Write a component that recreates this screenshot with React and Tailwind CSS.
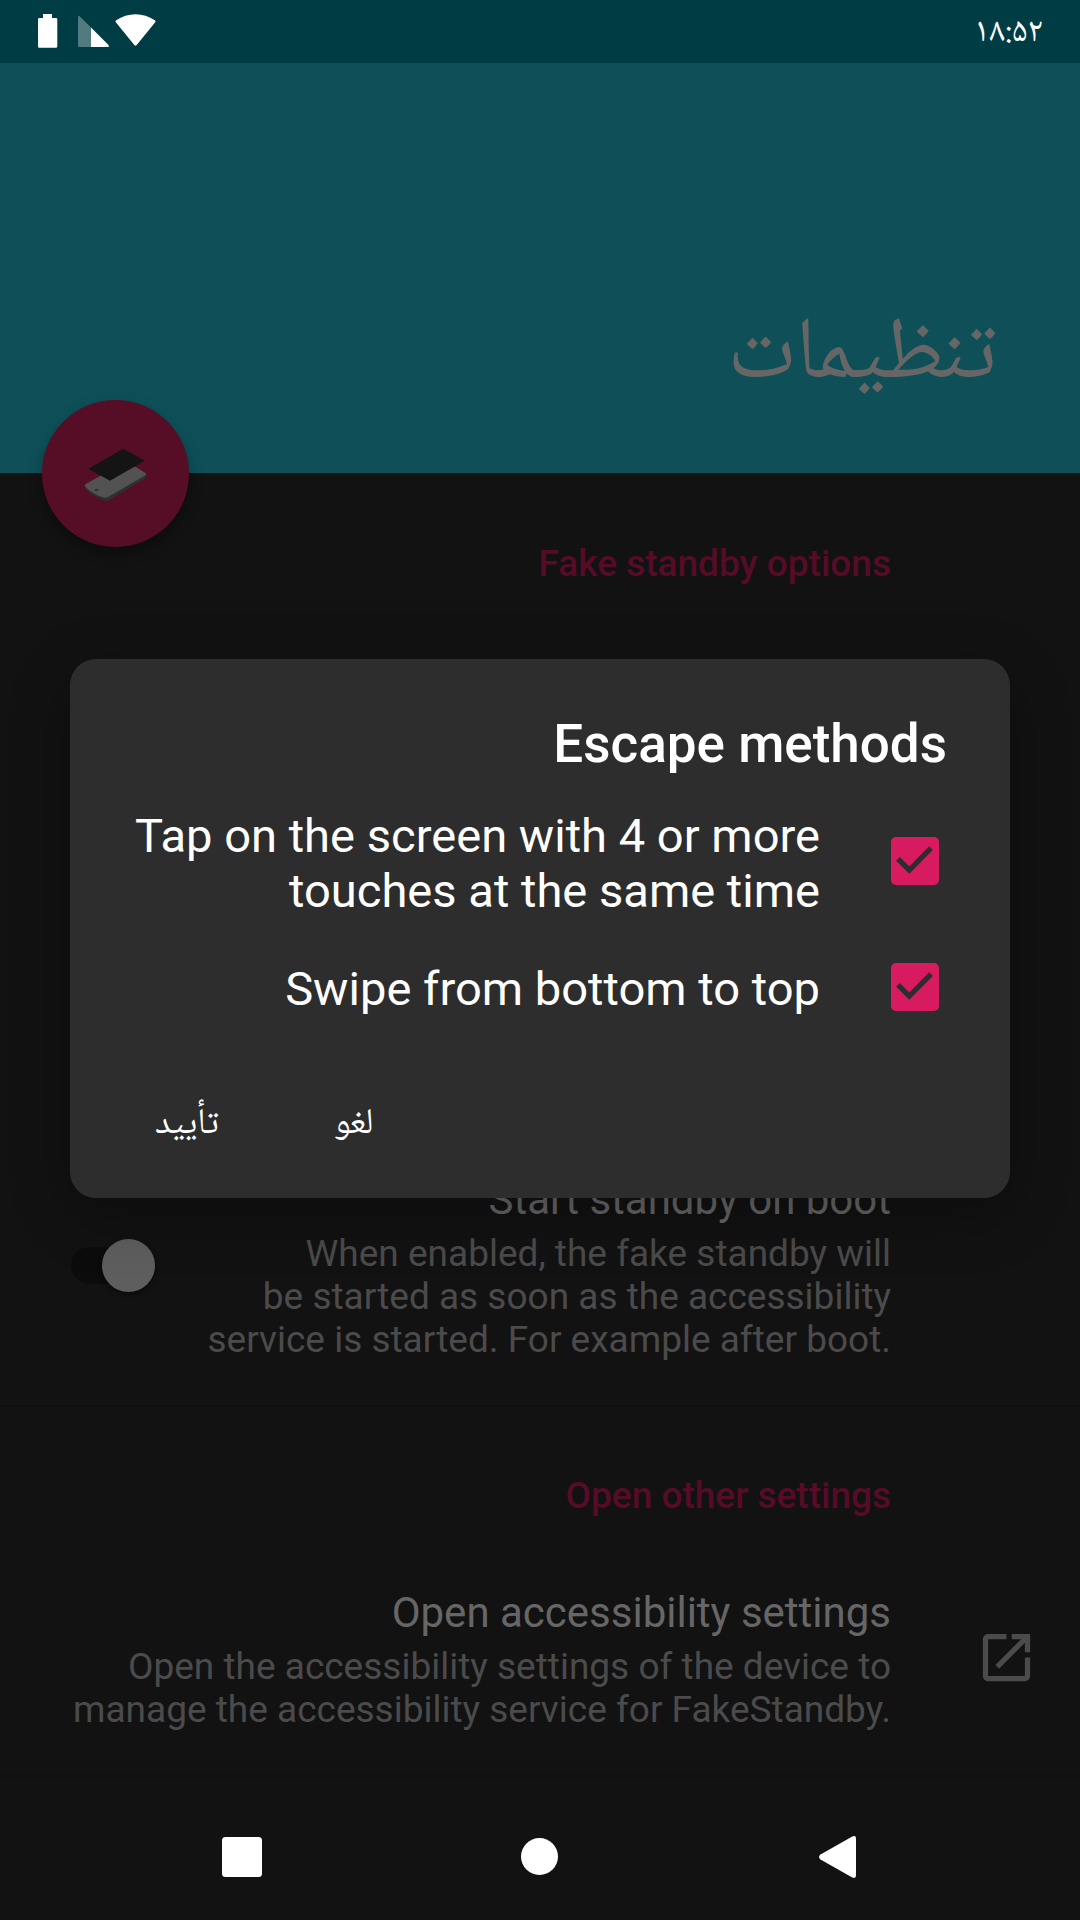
function StatusBar() {
  return (
    <header className="flex h-[63px] items-start justify-between bg-[#003c43]">
      <svg className="h-[63px] w-[200px]" viewBox="0 0 200 63" fill="#fff">
        <path d="M43 14h9v4h4q1.300 0 1.300 1.300v27q0 1.500-1.300 1.500H39.300q-1.300 0-1.300-1.300V19.300Q38 18 39.300 18H43z" />
        <path d="M78 17.200q0-2.400 1.800-.6L91 27.600V47H79.300Q78 47 78 45.700z" opacity=".32" />
        <path d="M91 27.600 108.500 45q1 2-.8 2H91z" />
        <path d="M115.800 22.300q-1-1 .4-2Q125 14.200 135.500 14.200t19.300 6.100q1.400 1 .4 2L136.700 45q-1.200 1.300-2.400 0z" />
      </svg>
      <span dir="ltr" className="mr-[37px] mt-[14px] font-['Noto_Naskh_Arabic','Noto_Sans_Arabic','DejaVu_Sans',sans-serif] text-[34.5px] leading-[40px] text-white">۱۸:۵۲</span>
    </header>
  );
}

function Fab() {
  return (
    <div className="absolute left-[42px] top-[400px] size-[147px] rounded-full bg-[#560d26] shadow-[0_6px_14px_rgba(0,0,0,0.35)]">
      <svg className="size-full" viewBox="0 0 147 147">
        <path d="M42.700 85.500v3Q51 97 63 100.700q2 .6 3.500-.3L104.500 78v-3z" fill="#2f2f2f" />
        <path d="M43.500 84.300 85 60.500l8 6 10.500 6.500q1.500 1.200 0 2.200L66 97q-2 1-4.200.5Q50 94 43.200 86.500q-.9-1.300.3-2.200z" fill="#525252" />
        <ellipse cx="54.500" cy="90" rx="2" ry="1.200" fill="#333" />
        <path d="M81.300 48.700 102.700 60.700 68 80.700 46.300 68.700z" fill="#141414" />
      </svg>
    </div>
  );
}

function CheckRow({ children, className }) {
  return (
    <div className={className}>
      <span dir="ltr" className="w-[750px] whitespace-pre-line text-right text-[47.100px] leading-[55px] text-white">{children}</span>
      <svg className="relative -top-[2px] ml-[71px] size-[48px]" viewBox="0 0 48 48">
        <rect width="48" height="48" rx="5" fill="#d81b60" />
        <path d="M7 21.800 18.300 33 40 11.200" fill="none" stroke="#2d2d2d" strokeWidth="5.200" />
      </svg>
    </div>
  );
}

function Dialog() {
  return (
    <section className="absolute left-[70px] top-[659px] flex h-[539px] w-[940px] flex-col rounded-[26px] bg-[#2d2d2d] shadow-[0_16px_60px_rgba(0,0,0,0.3)]">
      <h2 className="mr-[63px] mt-[54px] text-right text-[53px] font-medium leading-[62px] text-white">Escape methods</h2>
      <CheckRow className="mt-[33px] flex h-[110px] items-center">{"Tap on the screen with 4 or more\ntouches at the same time"}</CheckRow>
      <CheckRow className="mt-[43px] flex h-[55px] items-center">Swipe from bottom to top</CheckRow>
      <div className="ml-[85px] mt-[85px] flex items-start gap-[115px] font-['Noto_Naskh_Arabic','Noto_Sans_Arabic','DejaVu_Sans',sans-serif] text-[36px] leading-[50px] text-white">
        <span className="w-[64px] whitespace-nowrap">تأیید</span>
        <span className="whitespace-nowrap">لغو</span>
      </div>
    </section>
  );
}

export default function App() {
  return (
    <main className="relative flex h-[1920px] w-[1080px] flex-col overflow-hidden bg-[#121212] font-['Roboto',sans-serif]">
      <StatusBar />
      <div className="flex h-[410px] flex-col items-end justify-end bg-[#0f5058] pb-[60px] pr-[83px]">
        <h1 dir="rtl" className="font-['Noto_Naskh_Arabic','Noto_Sans_Arabic','DejaVu_Sans',sans-serif] text-[88px] leading-[110px] text-[#666]">تنظیمات</h1>
      </div>
      <section className="flex h-[934px] flex-col border-b-2 border-[#0f0f0f] pr-[189px] text-right">
        <h3 className="mt-[69px] text-[37px] font-medium leading-[43px] text-[#560b26]">Fake standby options</h3>
        <div className="mt-[590px] flex">
          <div className="ml-[71px] mt-[63px] flex h-[54px] w-[84px] items-center">
            <div className="flex h-[37px] w-[70px] items-center rounded-full bg-[#0c0c0c]">
              <div className="ml-[31px] size-[53px] shrink-0 rounded-full bg-[#5e5e5e] shadow-[0_2px_5px_rgba(0,0,0,0.5)]" />
            </div>
          </div>
          <div className="flex-1">
            <p className="text-[42px] leading-[49px] text-[#666]">Start standby on boot</p>
            <p className="mt-[8px] whitespace-pre-line text-[37px] leading-[43px] text-[#4b4b4b]">{"When enabled, the fake standby will\nbe started as soon as the accessibility\nservice is started. For example after boot."}</p>
          </div>
        </div>
      </section>
      <section className="flex h-[370px] flex-col border-b-2 border-[#0f0f0f]">
        <h3 className="mr-[189px] mt-[67px] text-right text-[37px] font-medium leading-[43px] text-[#560b26]">Open other settings</h3>
        <div className="mr-[42px] mt-[71px] flex justify-end">
          <div className="text-right">
            <p className="text-[42px] leading-[49px] text-[#666]">Open accessibility settings</p>
            <p className="mt-[8px] whitespace-pre-line text-[37px] leading-[43px] text-[#4b4b4b]">{"Open the accessibility settings of the device to\nmanage the accessibility service for FakeStandby."}</p>
          </div>
          <svg className="ml-[84px] mt-[38px] size-[63px]" viewBox="0 0 24 24" fill="#4b4b4b">
            <path d="M19 19H5V5h7V3H5c-1.110 0-2 .9-2 2v14c0 1.100.89 2 2 2h14c1.100 0 2-.9 2-2v-7h-2zM14 3v2h3.590l-9.830 9.830 1.410 1.410L19 6.410V10h2V3z" />
          </svg>
        </div>
      </section>
      <nav className="flex flex-1">
        <svg className="h-[143px] w-[1080px]" viewBox="0 1777 1080 143" fill="#fff">
          <rect x="222" y="1837" width="40" height="40" rx="3.500" />
          <circle cx="539.500" cy="1856.500" r="18.500" />
          <path d="M820.500 1859.500q-3-2.500 0-5L852.300 1836.400q3.700-1.500 3.700 2v37.200q0 3.500-3.700 2z" />
        </svg>
      </nav>
      <Fab />
      <Dialog />
    </main>
  );
}
